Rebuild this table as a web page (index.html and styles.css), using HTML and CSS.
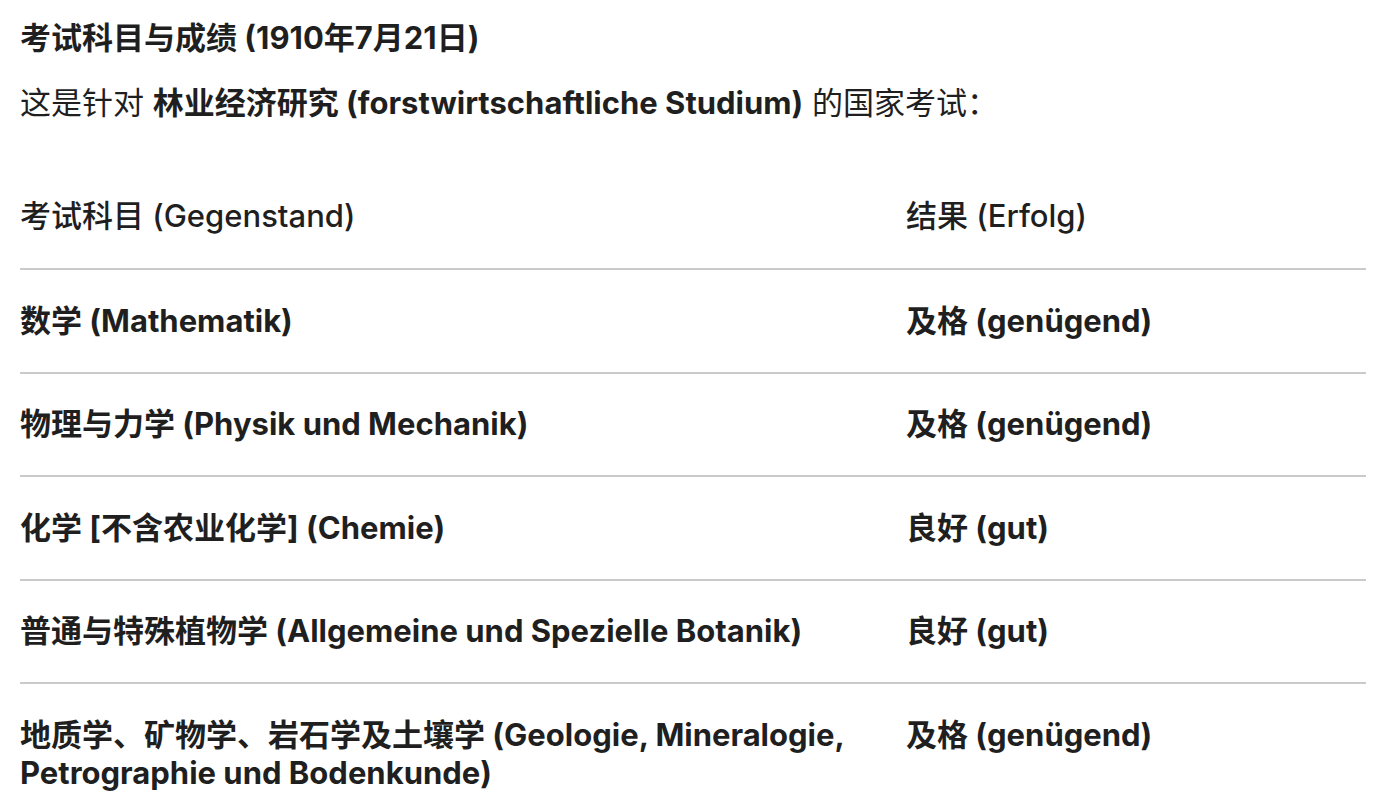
FILE: index.html
```html
<!DOCTYPE html>
<html lang="zh">
<head>
<meta charset="utf-8">
<link rel="stylesheet" href="styles.css">
</head>
<body>
<div class="page">
  <h3 class="title">考试科目与成绩 (1910年7月21日)</h3>
  <p class="intro">这是针对 <strong>林业经济研究 (forstwirtschaftliche Studium)</strong> 的国家考试：</p>
  <table class="grades">
    <thead>
      <tr><th>考试科目 (Gegenstand)</th><th>结果 (Erfolg)</th></tr>
    </thead>
    <tbody>
      <tr><td>数学 (Mathematik)</td><td>及格 (genügend)</td></tr>
      <tr><td>物理与力学 (Physik und Mechanik)</td><td>及格 (genügend)</td></tr>
      <tr><td>化学 [不含农业化学] (Chemie)</td><td>良好 (gut)</td></tr>
      <tr><td>普通与特殊植物学 (Allgemeine und Spezielle Botanik)</td><td>良好 (gut)</td></tr>
      <tr><td>地质学、矿物学、岩石学及土壤学 (Geologie, Mineralogie, Petrographie und Bodenkunde)</td><td>及格 (genügend)</td></tr>
    </tbody>
  </table>
</div>
</body>
</html>
```

FILE: styles.css
```css
html, body {
  margin: 0;
  padding: 0;
  background: #ffffff;
}
body {
  font-family: "Inter", "Noto Sans CJK SC", sans-serif;
  color: #1f1f1f;
  font-size: 31px;
  line-height: 38px;
}
.page {
  padding: 19px 34px 0 20px;
}
.title {
  margin: 0;
  font-size: 31px;
  font-weight: 700;
  line-height: 38px;
}
.intro {
  margin: 27px 0 0 0;
}
.intro strong {
  font-weight: 700;
}
.grades {
  width: 100%;
  border-collapse: collapse;
  margin-top: 44px;
}
.grades th {
  text-align: left;
  font-weight: 500;
  padding: 31px 0 33px 0;
  border-bottom: 2px solid #cacaca;
}
.grades td {
  font-weight: 700;
  padding: 31.5px 0 32px 0;
  border-bottom: 2px solid #cacaca;
  vertical-align: top;
}
.grades th:first-child, .grades td:first-child {
  width: 866px;
  padding-right: 20px;
}
.grades tbody tr:last-child td {
  border-bottom: none;
}
```
